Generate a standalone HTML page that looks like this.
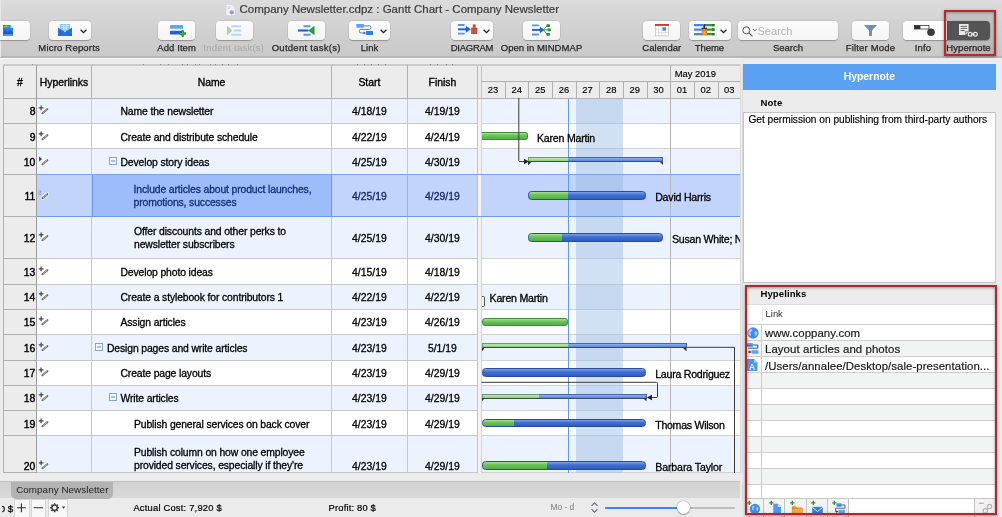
<!DOCTYPE html>
<html><head><meta charset="utf-8"><title>Company Newsletter</title>
<style>
*{box-sizing:border-box}
html,body{margin:0;padding:0}
body{width:1002px;height:517px;overflow:hidden;position:relative;background:#ececec;font-family:"Liberation Sans",sans-serif;color:#000;font-size:11px}
div,span,svg{position:absolute}
#tb{left:0;top:0;width:1002px;height:58px;background:linear-gradient(#dcdcdc,#d3d3d3 40%,#c9c9c9);border-bottom:2px solid #b6b6b6}
.title{top:3px;left:239.5px;font-size:11.5px;color:#3a3a3a;white-space:nowrap;-webkit-text-stroke:.2px #3a3a3a}
.btn{top:21px;height:18.5px;background:linear-gradient(#fcfcfc,#f4f4f4);border-radius:4px;box-shadow:0 0 0 .5px rgba(0,0,0,.10),0 1px 1px rgba(0,0,0,.25)}
.lbl{top:42px;font-size:9.5px;line-height:12px;color:#262626;white-space:nowrap;-webkit-text-stroke:.25px #262626}
.lbl.dis{color:#a9a9a9;-webkit-text-stroke:0}
.hd{background:#ececec;border-right:1px solid #b0b0b0;top:64px;height:35px;border-top:2px solid #cbcbcb;border-bottom:1px solid #b0b0b0;text-align:center;font-size:10.4px;line-height:32px;padding-top:.500px;white-space:nowrap;-webkit-text-stroke:.35px #000}
.row{left:3px;width:737px}
.c{top:0;height:100%;border-right:1px solid #c8c8c8;border-bottom:1px solid #c8c8c8;font-size:10.4px;white-space:nowrap;letter-spacing:-.13px;-webkit-text-stroke:.3px}
.num{left:0;width:34px;background:#ececec;text-align:right;padding-right:.6px;border-left:1px solid #b0b0b0;border-right:1px solid #9c9c9c;border-bottom:1px solid #b0b0b0;letter-spacing:0;-webkit-text-stroke:.4px}
.nm{line-height:13px}
.ctr{text-align:center;letter-spacing:0}
.gl{font-size:10.6px;white-space:nowrap;letter-spacing:-.1px;-webkit-text-stroke:.3px}
</style></head><body><div id="all" style="left:0;top:0;width:1002px;height:517px;will-change:transform">

<div id="tb">
<div style="left:0;top:0;width:1px;height:57px;background:#e9e9e9"></div>
<svg style="left:224.500px;top:3.500px" width="11" height="12" viewBox="0 0 11 12"><path d="M1 .5h6l3 3v8H1z" fill="#f2f2f5" stroke="#d0d0d6" stroke-width=".6"/><circle cx="6.800" cy="8.300" r="2.100" fill="#8c9ce4"/><path d="M2.500 3h3M2.500 4.500h2" stroke="#b5b9d8" stroke-width=".7"/></svg>
<div class="title">Company Newsletter.cdpz : Gantt Chart - Company Newsletter</div>
<div class="btn" style="left:-6px;width:35.5px;"><svg style="left:8.5px;top:3.5px" width="10.5" height="11.5" viewBox="0 0 10.5 11.5"><path d="M0 0h7.500l3 3v8.500H0z" fill="#2a7de6"/><path d="M7.500 0v3h3z" fill="#bfe0ff"/><path d="M.800 1.600h5" stroke="#6fd35a" stroke-width="1.600"/><path d="M0 7l2.500-2 2.500 2 2.500-1.500 3 2.500v1H0z" fill="#1b5fc4"/><path d="M1 10h8.500" stroke="#7fb8f7" stroke-width=".8"/></svg></div>
<div class="btn" style="left:48.5px;width:42.0px;"><svg style="left:9.0px;top:3px" width="14" height="12" viewBox="0 0 14 12"><path d="M2 0h10v7H2z" fill="#8cc6f8"/><path d="M3.200 1.500h7.600M3.200 3.300h7.600M3.200 5.100h7.600M5.700 .500v5M8.300 .500v5" stroke="#e4f2ff" stroke-width=".6"/><path d="M0 3.500v8.500h14V3.500l-7 4.500z" fill="#2a72da"/><path d="M0 12l5.500-4.500M14 12l-5.500-4.500" stroke="#1d5cc0" stroke-width=".6"/></svg><svg style="left:31.3px;top:7.6px" width="7" height="5" viewBox="0 0 7 5"><path d="M.6.8 3.500 3.700 6.400.8" fill="none" stroke="#222" stroke-width="1.300"/></svg></div>
<div class="lbl " style="left:38.3px;letter-spacing:0.198px">Micro Reports</div>
<div class="btn" style="left:157.7px;width:37.30000000000001px;"><svg style="left:12.3px;top:3.8px" width="16" height="12" viewBox="0 0 16 12"><rect x="0" y="0" width="13" height="3.800" rx=".6" fill="#5aa5f6"/><rect x="0" y="5.700" width="13" height="3.800" rx=".6" fill="#1f63d8"/><path d="M10.400 8.500h4.600M12.700 6.200v4.600" stroke="#1e7a1e" stroke-width="2.400" stroke-linecap="round"/><path d="M10.600 8.500h4.200M12.700 6.400v4.200" stroke="#4ab84a" stroke-width="1.100" stroke-linecap="round"/></svg></div>
<div class="lbl " style="left:157.3px;letter-spacing:0.084px">Add Item</div>
<div class="btn" style="left:215.6px;width:37.0px;"><svg style="left:11.2px;top:4px" width="15" height="11" viewBox="0 0 15 11"><path d="M0 .500l5.200 5-5.200 5z" fill="#a4d8a8"/><path d="M4.200 1.200h10M6.600 5.500h7.600M4.200 9.800h10" stroke="#b9d6f8" stroke-width="2"/></svg></div>
<div class="lbl dis" style="left:203.3px;letter-spacing:0.238px">Indent task(s)</div>
<div class="btn" style="left:287.8px;width:37.5px;"><svg style="left:10.7px;top:4px" width="17" height="11" viewBox="0 0 17 11"><path d="M16.500 .800l-6.300 4.700 6.300 4.700z" fill="#2c9a2c"/><path d="M5.500 1.300h7M5.500 9.700h7" stroke="#4a9af5" stroke-width="1.900"/><path d="M0 5.500h10.500" stroke="#1f62d6" stroke-width="2.100"/></svg></div>
<div class="lbl " style="left:271.7px;letter-spacing:0.27px">Outdent task(s)</div>
<div class="btn" style="left:348.6px;width:41.599999999999966px;"><svg style="left:7.4px;top:3px" width="17.5" height="11.5" viewBox="0 0 17.5 11.5"><rect x=".300" y="0" width="7.600" height="3.700" rx=".5" fill="#5aa5f6"/><rect x="10" y="7" width="7" height="4" rx=".5" fill="#2f7fe6"/><path d="M7.900 1.900h5.500q1.500 0 1.500 1.500v.5q0 1.500 -1.500 1.500h-8.500q-1.500 0 -1.500 1.500v.6q0 1.500 1.500 1.500h3.500" fill="none" stroke="#4a6ea8" stroke-width=".9"/><path d="M7.600 7.400l2.200 1.600-2.200 1.600z" fill="#2a4f8f"/></svg><svg style="left:31.2px;top:7.6px" width="7" height="5" viewBox="0 0 7 5"><path d="M.6.8 3.500 3.700 6.400.8" fill="none" stroke="#222" stroke-width="1.300"/></svg></div>
<div class="lbl " style="left:360.7px;letter-spacing:0.041px">Link</div>
<div class="btn" style="left:451px;width:42.19999999999999px;"><svg style="left:7px;top:3.3px" width="20" height="11" viewBox="0 0 20 11"><path d="M0 1h6.600M0 9.600h6.600" stroke="#4a9af5" stroke-width="1.900"/><path d="M0 5.300h9" stroke="#1f62d6" stroke-width="2"/><path d="M7.800 1.800l5 3.500-5 3.500z" fill="#1f62d6"/><path d="M13.200 3.800h6v6.200h-6z" fill="#c7402c"/><path d="M14.800 .400h2.800v3.400h-2.800z" fill="#c7402c"/><path d="M14.600 5.200v4M16.200 5.200v4M17.800 5.200v4" stroke="#e08070" stroke-width=".5"/></svg><svg style="left:31.6px;top:7.6px" width="7" height="5" viewBox="0 0 7 5"><path d="M.6.8 3.500 3.700 6.400.8" fill="none" stroke="#222" stroke-width="1.300"/></svg></div>
<div class="lbl " style="left:450.7px;letter-spacing:-0.249px">DIAGRAM</div>
<div class="btn" style="left:523px;width:37px;"><svg style="left:9.3px;top:3.3px" width="19" height="12" viewBox="0 0 19 12"><path d="M0 1.400h6.800M0 10.500h6.800" stroke="#4a9af5" stroke-width="1.900"/><path d="M0 5.900h9" stroke="#1f62d6" stroke-width="2"/><path d="M7.800 2.600l4.600 3.300-4.600 3.300z" fill="#1f62d6"/><path d="M11 5.900h4M11.500 5.900l3.500-4M11.500 5.900l3.500 4.400" fill="none" stroke="#2c8f2c" stroke-width=".9"/><rect x="14.300" y=".200" width="3.800" height="2.800" rx="1.200" fill="#2c8f2c"/><rect x="15.200" y="4.500" width="3.800" height="2.800" rx="1.200" fill="#2c8f2c"/><rect x="14.300" y="9" width="3.800" height="2.800" rx="1.200" fill="#2c8f2c"/></svg></div>
<div class="lbl " style="left:500.7px;letter-spacing:0.055px">Open in MINDMAP</div>
<div class="btn" style="left:643.4px;width:37.0px;"><svg style="left:11.6px;top:3.4px" width="14" height="12.2" viewBox="0 0 14 12.2"><rect x=".300" y=".300" width="13.400" height="11.600" fill="#fff" stroke="#b5b5b5" stroke-width=".6"/><rect x="0" y="0" width="14" height="1.900" fill="#c23a35"/><path d="M3.600 2v10M7 2v10M10.400 2v10M0 5.300h14M0 8.600h14" stroke="#cdcdcd" stroke-width=".6"/><rect x="7.600" y="3.400" width="3.200" height="3.200" fill="#2f7fe6"/></svg></div>
<div class="lbl " style="left:642.3px;letter-spacing:0.055px">Calendar</div>
<div class="btn" style="left:688.8px;width:41.80000000000007px;"><svg style="left:5.5px;top:3px" width="20.5" height="11.5" viewBox="0 0 20.5 11.5"><path d="M0 1.200h9M0 5.700h9M0 10.200h9" stroke="#3a8af0" stroke-width="2.200"/><path d="M11 1.200h9.500M11 5.700h9.500M11 10.200h9.500" stroke="#2f9a2f" stroke-width="2.200"/><path d="M18 1.200h2.500M18 5.700h2.500M18 10.200h2.500" stroke="#1f7a1f" stroke-width="2.200"/><rect x="9.300" y="0" width="1.800" height="4" rx=".8" fill="#2b2b3a"/><rect x="7.600" y="3.600" width="5.400" height="1.800" fill="#3a3a3a"/><rect x="7.600" y="5.400" width="5.400" height="6" fill="#e08a2a"/><path d="M9 7.500v3M10.300 7.500v3M11.600 7.500v3" stroke="#f5c27a" stroke-width=".5"/></svg><svg style="left:31.4px;top:7.6px" width="7" height="5" viewBox="0 0 7 5"><path d="M.6.8 3.500 3.700 6.400.8" fill="none" stroke="#222" stroke-width="1.300"/></svg></div>
<div class="lbl " style="left:694.7px;letter-spacing:-0.056px">Theme</div>
<div class="btn" style="left:737.5px;width:100.5px"><svg style="left:4.0px;top:4.8px" width="16" height="11" viewBox="0 0 16 11"><circle cx="4.300" cy="4.300" r="3.500" fill="none" stroke="#555" stroke-width="1"/><path d="M6.900 6.900l3.600 3.500" stroke="#555" stroke-width="1.200"/><path d="M11 3l1.900 1.900 1.900-1.900" fill="none" stroke="#555" stroke-width=".9"/></svg><span style="left:20px;top:3.500px;font-size:11px;line-height:13px;color:#b3b3b3">Search</span></div>
<div class="lbl " style="left:773px;letter-spacing:-0.018px">Search</div>
<div class="btn" style="left:852px;width:37.299999999999955px;"><svg style="left:12.3px;top:3.7px" width="13" height="11" viewBox="0 0 13 11"><path d="M0 0h13L8 5.600V11H5V5.600z" fill="#6d90bb"/></svg></div>
<div class="lbl " style="left:845.7px;letter-spacing:0.189px">Filter Mode</div>
<div class="btn" style="left:902.7px;width:87px;background:linear-gradient(90deg,#fcfcfc 44px,#5c5c5c 44px)"><svg style="left:11.8px;top:4px" width="21" height="12" viewBox="0 0 21 12"><rect x=".4" y=".4" width="14.500" height="3.600" fill="#fff" stroke="#3a3a3a" stroke-width=".8"/><rect x=".4" y=".4" width="6" height="3.600" fill="#2e2e2e"/><circle cx="17" cy="7.300" r="3.800" fill="#3a3a3a"/></svg><svg style="left:56.1px;top:3px" width="19" height="13" viewBox="0 0 19 13"><path d="M0 0h9.600v7.500l-3 3.500H0z" fill="#fff"/><path d="M1.600 2.300h6.400M1.600 4.400h6.400M1.600 6.500h4" stroke="#5c5c5c" stroke-width=".9"/><path d="M6.400 11V7.600h3.200" fill="#d8d8d8" stroke="#5c5c5c" stroke-width=".5"/><circle cx="11.200" cy="10.200" r="1.900" fill="none" stroke="#fff" stroke-width="1.200"/><circle cx="16.300" cy="10.200" r="1.900" fill="none" stroke="#fff" stroke-width="1.200"/><path d="M12 10.200h3.600" stroke="#fff" stroke-width="1.200"/></svg></div>
<div class="lbl " style="left:914.7px;letter-spacing:0.185px">Info</div>
<div class="lbl " style="left:946.3px;letter-spacing:0.062px">Hypernote</div>
<div style="left:943.500px;top:10px;width:52.500px;height:46px;border:2px solid #bb272d;background:rgba(0,0,0,.085);box-shadow:0 1px 3px rgba(0,0,0,.4),inset 0 1px 3px rgba(0,0,0,.3)"></div>
</div>
<div style="left:0;top:58px;width:1002px;height:1.200px;background:#f8f8f8"></div>
<div class="hd" style="left:3px;width:34px;border-left:1px solid #b0b0b0;border-right:1px solid #9c9c9c;">#</div>
<div class="hd" style="left:37px;width:55px;">Hyperlinks</div>
<div class="hd" style="left:92px;width:240px;">Name</div>
<div class="hd" style="left:332px;width:75.8px;">Start</div>
<div class="hd" style="left:407.8px;width:70.2px;">Finish</div>
<div class="row" style="top:99px;height:25px;background:#edf3fe;overflow:hidden">
<div class="c num" style="line-height:13px;padding-top:6px">8</div>
<div class="c" style="left:34px;width:55px"></div>
<svg style="left:34.5px;top:6.299999999999997px" width="11" height="10" viewBox="0 0 11 10"><path d="M4.400 8.200l4.900-4" stroke="#fff" stroke-width="3.600" stroke-linecap="round" opacity=".8"/><path d="M.7 2.900h4.800M3.100 .500v4.800" stroke="#fff" stroke-width="2.600" opacity=".8"/><path d="M.7 2.900h4.800M3.100 .500v4.800" stroke="#4a4a4a" stroke-width="1.300"/><path d="M4.400 8.200l4.900-4" stroke="#676767" stroke-width="2.100" stroke-linecap="round"/><path d="M5 7.700l1.300-1.050M7.400 5.750l1.300-1.050" stroke="#e8e8e8" stroke-width=".7" stroke-linecap="round"/></svg>
<div class="c" style="left:89px;width:240px;">
<span class="nm" style="left:28.5px;top:6px">Name the newsletter</span>
</div>
<div class="c ctr" style="left:329px;width:75.800px;line-height:13px;padding-top:6px;">4/18/19</div>
<div class="c ctr" style="left:404.800px;width:70.200px;line-height:13px;padding-top:6px;border-right:1px solid #c2c2c2;">4/19/19</div>
<div style="left:478px;top:0;width:259px;height:100%;border-bottom:1px solid #d2d2d2"></div>
</div>
<div class="row" style="top:124px;height:25px;background:#fff;overflow:hidden">
<div class="c num" style="line-height:13px;padding-top:7px">9</div>
<div class="c" style="left:34px;width:55px"></div>
<svg style="left:34.5px;top:7.300000000000011px" width="11" height="10" viewBox="0 0 11 10"><path d="M4.400 8.200l4.900-4" stroke="#fff" stroke-width="3.600" stroke-linecap="round" opacity=".8"/><path d="M.7 2.900h4.800M3.100 .500v4.800" stroke="#fff" stroke-width="2.600" opacity=".8"/><path d="M.7 2.900h4.800M3.100 .500v4.800" stroke="#4a4a4a" stroke-width="1.300"/><path d="M4.400 8.200l4.900-4" stroke="#676767" stroke-width="2.100" stroke-linecap="round"/><path d="M5 7.700l1.300-1.050M7.400 5.750l1.300-1.050" stroke="#e8e8e8" stroke-width=".7" stroke-linecap="round"/></svg>
<div class="c" style="left:89px;width:240px;">
<span class="nm" style="left:28.5px;top:7px">Create and distribute schedule</span>
</div>
<div class="c ctr" style="left:329px;width:75.800px;line-height:13px;padding-top:7px;">4/22/19</div>
<div class="c ctr" style="left:404.800px;width:70.200px;line-height:13px;padding-top:7px;border-right:1px solid #c2c2c2;">4/24/19</div>
<div style="left:478px;top:0;width:259px;height:100%;border-bottom:1px solid #d2d2d2"></div>
</div>
<div class="row" style="top:149px;height:26px;background:#edf3fe;overflow:hidden">
<div class="c num" style="line-height:13px;padding-top:7px">10</div>
<div class="c" style="left:34px;width:55px"></div>
<svg style="left:34.5px;top:7.300000000000011px" width="11" height="10" viewBox="0 0 11 10"><path d="M4.400 8.200l4.900-4" stroke="#fff" stroke-width="3.600" stroke-linecap="round" opacity=".8"/><path d="M1 .500l3.200 2.500-3.200 2.500z" fill="#4a4a4a"/><path d="M4.400 8.200l4.900-4" stroke="#676767" stroke-width="2.100" stroke-linecap="round"/><path d="M5 7.700l1.300-1.050M7.400 5.750l1.300-1.050" stroke="#e8e8e8" stroke-width=".7" stroke-linecap="round"/></svg>
<div class="c" style="left:89px;width:240px;">
<svg style="left:16.7px;top:8.3px" width="8" height="8" viewBox="0 0 8 8"><rect x=".5" y=".5" width="7" height="7" fill="#f4f8ff" stroke="#86a6cc" stroke-width="1"/><path d="M2 4h4" stroke="#5f86bd" stroke-width="1"/></svg>
<span class="nm" style="left:28.5px;top:7px">Develop story ideas</span>
</div>
<div class="c ctr" style="left:329px;width:75.800px;line-height:13px;padding-top:7px;">4/25/19</div>
<div class="c ctr" style="left:404.800px;width:70.200px;line-height:13px;padding-top:7px;border-right:1px solid #c2c2c2;">4/30/19</div>
<div style="left:478px;top:0;width:259px;height:100%;border-bottom:1px solid #d2d2d2"></div>
</div>
<div class="row" style="top:175px;height:42px;background:#c2d4fb;overflow:hidden">
<div class="c num" style="line-height:13px;padding-top:15px">11</div>
<div class="c" style="left:34px;width:55px"></div>
<svg style="left:34.5px;top:15.300000000000011px" width="11" height="10" viewBox="0 0 11 10"><path d="M4.400 8.200l4.900-4" stroke="#fff" stroke-width="3.600" stroke-linecap="round" opacity=".8"/><path d="M1 1.200h.01M2.800 1.200h.01M1 2.800h.01M2.800 2.800h.01M1 4.400h.01M2.800 4.400h.01" stroke="#6a76a0" stroke-width="1" stroke-linecap="round"/><path d="M4.400 8.200l4.900-4" stroke="#676767" stroke-width="2.100" stroke-linecap="round"/><path d="M5 7.700l1.300-1.050M7.400 5.750l1.300-1.050" stroke="#e8e8e8" stroke-width=".7" stroke-linecap="round"/></svg>
<div class="c" style="left:89px;width:240px;background:#9ebcf9;border:1.500px solid #6b98ea;color:#10307a;top:-1px;height:43px;">
<span class="nm" style="left:40.5px;top:7.5px">Include articles about product launches,</span>
<span class="nm" style="left:40.5px;top:20.5px">promotions, successes</span>
</div>
<div class="c ctr" style="left:329px;width:75.800px;line-height:13px;padding-top:15px;color:#14296a;border-right-color:#94b2ef;">4/25/19</div>
<div class="c ctr" style="left:404.800px;width:70.200px;line-height:13px;padding-top:15px;border-right:1px solid #c2c2c2;color:#14296a;">4/29/19</div>
<div style="left:478px;top:0;width:259px;height:100%;border-bottom:1px solid #d2d2d2"></div>
</div>
<div class="row" style="top:217px;height:42px;background:#edf3fe;overflow:hidden">
<div class="c num" style="line-height:13px;padding-top:15px">12</div>
<div class="c" style="left:34px;width:55px"></div>
<svg style="left:34.5px;top:15.300000000000011px" width="11" height="10" viewBox="0 0 11 10"><path d="M4.400 8.200l4.900-4" stroke="#fff" stroke-width="3.600" stroke-linecap="round" opacity=".8"/><path d="M.7 2.900h4.800M3.100 .500v4.800" stroke="#fff" stroke-width="2.600" opacity=".8"/><path d="M.7 2.900h4.800M3.100 .500v4.800" stroke="#4a4a4a" stroke-width="1.300"/><path d="M4.400 8.200l4.900-4" stroke="#676767" stroke-width="2.100" stroke-linecap="round"/><path d="M5 7.700l1.300-1.050M7.400 5.750l1.300-1.050" stroke="#e8e8e8" stroke-width=".7" stroke-linecap="round"/></svg>
<div class="c" style="left:89px;width:240px;">
<span class="nm" style="left:42.0px;top:8px">Offer discounts and other perks to</span>
<span class="nm" style="left:42.0px;top:21px">newsletter subscribers</span>
</div>
<div class="c ctr" style="left:329px;width:75.800px;line-height:13px;padding-top:15px;">4/25/19</div>
<div class="c ctr" style="left:404.800px;width:70.200px;line-height:13px;padding-top:15px;border-right:1px solid #c2c2c2;">4/30/19</div>
<div style="left:478px;top:0;width:259px;height:100%;border-bottom:1px solid #d2d2d2"></div>
</div>
<div class="row" style="top:259px;height:26px;background:#fff;overflow:hidden">
<div class="c num" style="line-height:13px;padding-top:7px">13</div>
<div class="c" style="left:34px;width:55px"></div>
<svg style="left:34.5px;top:7.300000000000011px" width="11" height="10" viewBox="0 0 11 10"><path d="M4.400 8.200l4.900-4" stroke="#fff" stroke-width="3.600" stroke-linecap="round" opacity=".8"/><path d="M.7 2.900h4.800M3.100 .500v4.800" stroke="#fff" stroke-width="2.600" opacity=".8"/><path d="M.7 2.900h4.800M3.100 .500v4.800" stroke="#4a4a4a" stroke-width="1.300"/><path d="M4.400 8.200l4.900-4" stroke="#676767" stroke-width="2.100" stroke-linecap="round"/><path d="M5 7.700l1.300-1.050M7.400 5.750l1.300-1.050" stroke="#e8e8e8" stroke-width=".7" stroke-linecap="round"/></svg>
<div class="c" style="left:89px;width:240px;">
<span class="nm" style="left:28.5px;top:7px">Develop photo ideas</span>
</div>
<div class="c ctr" style="left:329px;width:75.800px;line-height:13px;padding-top:7px;">4/15/19</div>
<div class="c ctr" style="left:404.800px;width:70.200px;line-height:13px;padding-top:7px;border-right:1px solid #c2c2c2;">4/18/19</div>
<div style="left:478px;top:0;width:259px;height:100%;border-bottom:1px solid #d2d2d2"></div>
</div>
<div class="row" style="top:285px;height:25px;background:#edf3fe;overflow:hidden">
<div class="c num" style="line-height:13px;padding-top:6px">14</div>
<div class="c" style="left:34px;width:55px"></div>
<svg style="left:34.5px;top:6.300000000000011px" width="11" height="10" viewBox="0 0 11 10"><path d="M4.400 8.200l4.900-4" stroke="#fff" stroke-width="3.600" stroke-linecap="round" opacity=".8"/><path d="M.7 2.900h4.800M3.100 .500v4.800" stroke="#fff" stroke-width="2.600" opacity=".8"/><path d="M.7 2.900h4.800M3.100 .500v4.800" stroke="#4a4a4a" stroke-width="1.300"/><path d="M4.400 8.200l4.900-4" stroke="#676767" stroke-width="2.100" stroke-linecap="round"/><path d="M5 7.700l1.300-1.050M7.400 5.750l1.300-1.050" stroke="#e8e8e8" stroke-width=".7" stroke-linecap="round"/></svg>
<div class="c" style="left:89px;width:240px;">
<span class="nm" style="left:28.5px;top:6px">Create a stylebook for contributors 1</span>
</div>
<div class="c ctr" style="left:329px;width:75.800px;line-height:13px;padding-top:6px;">4/22/19</div>
<div class="c ctr" style="left:404.800px;width:70.200px;line-height:13px;padding-top:6px;border-right:1px solid #c2c2c2;">4/22/19</div>
<div style="left:478px;top:0;width:259px;height:100%;border-bottom:1px solid #d2d2d2"></div>
</div>
<div class="row" style="top:310px;height:25px;background:#fff;overflow:hidden">
<div class="c num" style="line-height:13px;padding-top:6px">15</div>
<div class="c" style="left:34px;width:55px"></div>
<svg style="left:34.5px;top:6.300000000000011px" width="11" height="10" viewBox="0 0 11 10"><path d="M4.400 8.200l4.900-4" stroke="#fff" stroke-width="3.600" stroke-linecap="round" opacity=".8"/><path d="M.7 2.900h4.800M3.100 .500v4.800" stroke="#fff" stroke-width="2.600" opacity=".8"/><path d="M.7 2.900h4.800M3.100 .500v4.800" stroke="#4a4a4a" stroke-width="1.300"/><path d="M4.400 8.200l4.900-4" stroke="#676767" stroke-width="2.100" stroke-linecap="round"/><path d="M5 7.700l1.300-1.050M7.400 5.750l1.300-1.050" stroke="#e8e8e8" stroke-width=".7" stroke-linecap="round"/></svg>
<div class="c" style="left:89px;width:240px;">
<span class="nm" style="left:28.5px;top:6px">Assign articles</span>
</div>
<div class="c ctr" style="left:329px;width:75.800px;line-height:13px;padding-top:6px;">4/23/19</div>
<div class="c ctr" style="left:404.800px;width:70.200px;line-height:13px;padding-top:6px;border-right:1px solid #c2c2c2;">4/26/19</div>
<div style="left:478px;top:0;width:259px;height:100%;border-bottom:1px solid #d2d2d2"></div>
</div>
<div class="row" style="top:335px;height:26px;background:#edf3fe;overflow:hidden">
<div class="c num" style="line-height:13px;padding-top:7px">16</div>
<div class="c" style="left:34px;width:55px"></div>
<svg style="left:34.5px;top:7.300000000000011px" width="11" height="10" viewBox="0 0 11 10"><path d="M4.400 8.200l4.900-4" stroke="#fff" stroke-width="3.600" stroke-linecap="round" opacity=".8"/><path d="M.7 2.900h4.800M3.100 .500v4.800" stroke="#fff" stroke-width="2.600" opacity=".8"/><path d="M.7 2.900h4.800M3.100 .500v4.800" stroke="#4a4a4a" stroke-width="1.300"/><path d="M4.400 8.200l4.900-4" stroke="#676767" stroke-width="2.100" stroke-linecap="round"/><path d="M5 7.700l1.300-1.050M7.400 5.750l1.300-1.050" stroke="#e8e8e8" stroke-width=".7" stroke-linecap="round"/></svg>
<div class="c" style="left:89px;width:240px;">
<svg style="left:3.1999999999999993px;top:8.3px" width="8" height="8" viewBox="0 0 8 8"><rect x=".5" y=".5" width="7" height="7" fill="#f4f8ff" stroke="#86a6cc" stroke-width="1"/><path d="M2 4h4" stroke="#5f86bd" stroke-width="1"/></svg>
<span class="nm" style="left:15px;top:7px">Design pages and write articles</span>
</div>
<div class="c ctr" style="left:329px;width:75.800px;line-height:13px;padding-top:7px;">4/23/19</div>
<div class="c ctr" style="left:404.800px;width:70.200px;line-height:13px;padding-top:7px;border-right:1px solid #c2c2c2;">5/1/19</div>
<div style="left:478px;top:0;width:259px;height:100%;border-bottom:1px solid #d2d2d2"></div>
</div>
<div class="row" style="top:361px;height:25px;background:#fff;overflow:hidden">
<div class="c num" style="line-height:13px;padding-top:6px">17</div>
<div class="c" style="left:34px;width:55px"></div>
<svg style="left:34.5px;top:6.300000000000011px" width="11" height="10" viewBox="0 0 11 10"><path d="M4.400 8.200l4.900-4" stroke="#fff" stroke-width="3.600" stroke-linecap="round" opacity=".8"/><path d="M.7 2.900h4.800M3.100 .500v4.800" stroke="#fff" stroke-width="2.600" opacity=".8"/><path d="M.7 2.900h4.800M3.100 .500v4.800" stroke="#4a4a4a" stroke-width="1.300"/><path d="M4.400 8.200l4.900-4" stroke="#676767" stroke-width="2.100" stroke-linecap="round"/><path d="M5 7.700l1.300-1.050M7.400 5.750l1.300-1.050" stroke="#e8e8e8" stroke-width=".7" stroke-linecap="round"/></svg>
<div class="c" style="left:89px;width:240px;">
<span class="nm" style="left:28.5px;top:6px">Create page layouts</span>
</div>
<div class="c ctr" style="left:329px;width:75.800px;line-height:13px;padding-top:6px;">4/23/19</div>
<div class="c ctr" style="left:404.800px;width:70.200px;line-height:13px;padding-top:6px;border-right:1px solid #c2c2c2;">4/29/19</div>
<div style="left:478px;top:0;width:259px;height:100%;border-bottom:1px solid #d2d2d2"></div>
</div>
<div class="row" style="top:386px;height:25px;background:#edf3fe;overflow:hidden">
<div class="c num" style="line-height:13px;padding-top:6px">18</div>
<div class="c" style="left:34px;width:55px"></div>
<svg style="left:34.5px;top:6.300000000000011px" width="11" height="10" viewBox="0 0 11 10"><path d="M4.400 8.200l4.900-4" stroke="#fff" stroke-width="3.600" stroke-linecap="round" opacity=".8"/><path d="M.7 2.900h4.800M3.100 .500v4.800" stroke="#fff" stroke-width="2.600" opacity=".8"/><path d="M.7 2.900h4.800M3.100 .500v4.800" stroke="#4a4a4a" stroke-width="1.300"/><path d="M4.400 8.200l4.900-4" stroke="#676767" stroke-width="2.100" stroke-linecap="round"/><path d="M5 7.700l1.300-1.050M7.400 5.750l1.300-1.050" stroke="#e8e8e8" stroke-width=".7" stroke-linecap="round"/></svg>
<div class="c" style="left:89px;width:240px;">
<svg style="left:16.7px;top:7.300000000000001px" width="8" height="8" viewBox="0 0 8 8"><rect x=".5" y=".5" width="7" height="7" fill="#f4f8ff" stroke="#86a6cc" stroke-width="1"/><path d="M2 4h4" stroke="#5f86bd" stroke-width="1"/></svg>
<span class="nm" style="left:28.5px;top:6px">Write articles</span>
</div>
<div class="c ctr" style="left:329px;width:75.800px;line-height:13px;padding-top:6px;">4/23/19</div>
<div class="c ctr" style="left:404.800px;width:70.200px;line-height:13px;padding-top:6px;border-right:1px solid #c2c2c2;">4/29/19</div>
<div style="left:478px;top:0;width:259px;height:100%;border-bottom:1px solid #d2d2d2"></div>
</div>
<div class="row" style="top:411px;height:25px;background:#fff;overflow:hidden">
<div class="c num" style="line-height:13px;padding-top:7px">19</div>
<div class="c" style="left:34px;width:55px"></div>
<svg style="left:34.5px;top:7.300000000000011px" width="11" height="10" viewBox="0 0 11 10"><path d="M4.400 8.200l4.900-4" stroke="#fff" stroke-width="3.600" stroke-linecap="round" opacity=".8"/><path d="M.7 2.900h4.800M3.100 .500v4.800" stroke="#fff" stroke-width="2.600" opacity=".8"/><path d="M.7 2.900h4.800M3.100 .500v4.800" stroke="#4a4a4a" stroke-width="1.300"/><path d="M4.400 8.200l4.900-4" stroke="#676767" stroke-width="2.100" stroke-linecap="round"/><path d="M5 7.700l1.300-1.050M7.400 5.750l1.300-1.050" stroke="#e8e8e8" stroke-width=".7" stroke-linecap="round"/></svg>
<div class="c" style="left:89px;width:240px;">
<span class="nm" style="left:42.0px;top:7px">Publish general services on back cover</span>
</div>
<div class="c ctr" style="left:329px;width:75.800px;line-height:13px;padding-top:7px;">4/23/19</div>
<div class="c ctr" style="left:404.800px;width:70.200px;line-height:13px;padding-top:7px;border-right:1px solid #c2c2c2;">4/29/19</div>
<div style="left:478px;top:0;width:259px;height:100%;border-bottom:1px solid #d2d2d2"></div>
</div>
<div class="row" style="top:436px;height:37px;background:#edf3fe;overflow:hidden">
<div class="c num" style="line-height:13px;padding-top:24px">20</div>
<div class="c" style="left:34px;width:55px"></div>
<svg style="left:34.5px;top:24.30000000000001px" width="11" height="10" viewBox="0 0 11 10"><path d="M4.400 8.200l4.900-4" stroke="#fff" stroke-width="3.600" stroke-linecap="round" opacity=".8"/><path d="M.7 2.900h4.800M3.100 .500v4.800" stroke="#fff" stroke-width="2.600" opacity=".8"/><path d="M.7 2.900h4.800M3.100 .500v4.800" stroke="#4a4a4a" stroke-width="1.300"/><path d="M4.400 8.200l4.900-4" stroke="#676767" stroke-width="2.100" stroke-linecap="round"/><path d="M5 7.700l1.300-1.050M7.400 5.750l1.300-1.050" stroke="#e8e8e8" stroke-width=".7" stroke-linecap="round"/></svg>
<div class="c" style="left:89px;width:240px;">
<span class="nm" style="left:42.0px;top:10px">Publish column on how one employee</span>
<span class="nm" style="left:42.0px;top:23px">provided services, especially if they're</span>
</div>
<div class="c ctr" style="left:329px;width:75.800px;line-height:13px;padding-top:24px;">4/23/19</div>
<div class="c ctr" style="left:404.800px;width:70.200px;line-height:13px;padding-top:24px;border-right:1px solid #c2c2c2;">4/29/19</div>
<div style="left:478px;top:0;width:259px;height:100%;border-bottom:1px solid #d2d2d2"></div>
</div>
<div style="left:32px;top:63.500px;width:1.200px;height:1px;background:#8c8c8c"></div>
<div style="left:143px;top:63.500px;width:1.200px;height:1px;background:#8c8c8c"></div>
<div style="left:160px;top:63.500px;width:1.200px;height:1px;background:#8c8c8c"></div>
<div style="left:168px;top:63.500px;width:1.200px;height:1px;background:#8c8c8c"></div>
<div style="left:182px;top:63.500px;width:1.200px;height:1px;background:#8c8c8c"></div>
<div style="left:187px;top:63.500px;width:1.200px;height:1px;background:#8c8c8c"></div>
<div style="left:195px;top:63.500px;width:1.200px;height:1px;background:#8c8c8c"></div>
<div style="left:199px;top:63.500px;width:1.200px;height:1px;background:#8c8c8c"></div>
<div style="left:210px;top:63.500px;width:1.200px;height:1px;background:#8c8c8c"></div>
<div style="left:215px;top:63.500px;width:1.200px;height:1px;background:#8c8c8c"></div>
<div style="left:222px;top:63.500px;width:1.200px;height:1px;background:#8c8c8c"></div>
<div style="left:228px;top:63.500px;width:1.200px;height:1px;background:#8c8c8c"></div>
<div style="left:237px;top:63.500px;width:1.200px;height:1px;background:#8c8c8c"></div>
<div style="left:357px;top:63.500px;width:1.200px;height:1px;background:#8c8c8c"></div>
<div style="left:364px;top:63.500px;width:1.200px;height:1px;background:#8c8c8c"></div>
<div style="left:371px;top:63.500px;width:1.200px;height:1px;background:#8c8c8c"></div>
<div style="left:378px;top:63.500px;width:1.200px;height:1px;background:#8c8c8c"></div>
<div style="left:385px;top:63.500px;width:1.200px;height:1px;background:#8c8c8c"></div>
<div style="left:430px;top:63.500px;width:1.200px;height:1px;background:#8c8c8c"></div>
<div style="left:437px;top:63.500px;width:1.200px;height:1px;background:#8c8c8c"></div>
<div style="left:446px;top:63.500px;width:1.200px;height:1px;background:#8c8c8c"></div>
<div style="left:452px;top:63.500px;width:1.200px;height:1px;background:#8c8c8c"></div>
<div style="left:478px;top:65px;width:3px;height:408px;background:#f3f3f3"></div>
<div style="left:477px;top:64px;width:263px;height:35px;background:#ececec;border-top:2px solid #cbcbcb;border-bottom:1px solid #b0b0b0"></div>
<div style="left:481px;top:65px;width:1px;height:34px;background:#c0c0c0"></div>
<div style="left:477px;top:65px;width:1px;height:34px;background:#b8b8b8"></div>
<div style="left:481px;top:81px;width:259px;height:1px;background:#b0b0b0"></div>
<div style="left:670.24px;top:65px;width:1px;height:17px;background:#b0b0b0"></div>
<div style="left:674.74px;top:67px;font-size:9.400px;line-height:13px;white-space:nowrap;-webkit-text-stroke:.15px">May 2019</div>
<div style="left:481.2px;top:83px;width:23.63px;text-align:center;font-size:9.400px;line-height:13px;-webkit-text-stroke:.15px">23</div>
<div style="left:504.83px;top:82px;width:1px;height:16px;background:#b0b0b0"></div>
<div style="left:504.83px;top:83px;width:23.63px;text-align:center;font-size:9.400px;line-height:13px;-webkit-text-stroke:.15px">24</div>
<div style="left:528.46px;top:82px;width:1px;height:16px;background:#b0b0b0"></div>
<div style="left:528.46px;top:83px;width:23.63px;text-align:center;font-size:9.400px;line-height:13px;-webkit-text-stroke:.15px">25</div>
<div style="left:552.09px;top:82px;width:1px;height:16px;background:#b0b0b0"></div>
<div style="left:552.09px;top:83px;width:23.63px;text-align:center;font-size:9.400px;line-height:13px;-webkit-text-stroke:.15px">26</div>
<div style="left:575.72px;top:82px;width:1px;height:16px;background:#b0b0b0"></div>
<div style="left:575.72px;top:83px;width:23.63px;text-align:center;font-size:9.400px;line-height:13px;-webkit-text-stroke:.15px">27</div>
<div style="left:599.35px;top:82px;width:1px;height:16px;background:#b0b0b0"></div>
<div style="left:599.35px;top:83px;width:23.63px;text-align:center;font-size:9.400px;line-height:13px;-webkit-text-stroke:.15px">28</div>
<div style="left:622.98px;top:82px;width:1px;height:16px;background:#b0b0b0"></div>
<div style="left:622.98px;top:83px;width:23.63px;text-align:center;font-size:9.400px;line-height:13px;-webkit-text-stroke:.15px">29</div>
<div style="left:646.61px;top:82px;width:1px;height:16px;background:#b0b0b0"></div>
<div style="left:646.61px;top:83px;width:23.63px;text-align:center;font-size:9.400px;line-height:13px;-webkit-text-stroke:.15px">30</div>
<div style="left:670.24px;top:82px;width:1px;height:16px;background:#b0b0b0"></div>
<div style="left:670.24px;top:83px;width:23.63px;text-align:center;font-size:9.400px;line-height:13px;-webkit-text-stroke:.15px">01</div>
<div style="left:693.87px;top:82px;width:1px;height:16px;background:#b0b0b0"></div>
<div style="left:693.87px;top:83px;width:23.63px;text-align:center;font-size:9.400px;line-height:13px;-webkit-text-stroke:.15px">02</div>
<div style="left:717.5px;top:82px;width:1px;height:16px;background:#b0b0b0"></div>
<div style="left:717.5px;top:83px;width:23.63px;text-align:center;font-size:9.400px;line-height:13px;-webkit-text-stroke:.15px">03</div>
<div style="left:481px;top:99px;width:1px;height:374px;background:#d2d2d2"></div>
<div style="left:575.72px;top:99px;width:47.26px;height:374px;background:rgba(146,180,224,.42)"></div>
<div style="left:670.24px;top:99px;width:1px;height:374px;background:#b4b4b4"></div>
<div style="left:567.500px;top:99px;width:1.200px;height:374px;background:#5b9cf0"></div>
<div style="left:37px;top:174px;width:703px;height:1.300px;background:#7aa2ee"></div>
<div style="left:37px;top:215.700px;width:703px;height:1.500px;background:#6f9aec"></div>
<div style="left:481.5px;top:132px;width:46.5px;height:8.3px;border-radius:0 3px 3px 0;background:linear-gradient(#a8e092,#6cc35a 40%,#4fae42);border:1px solid #3f8f33;border-left:none;"></div>
<div class="gl" style="left:537px;top:132px;line-height:13px;letter-spacing:-0.221px">Karen Martin</div>
<div style="left:528.3px;top:157px;width:134.70000000000005px;height:5.200px;background:linear-gradient(#8fb0ee,#5a84d8);border:1px solid #4468b4;border-bottom-color:#3c4c6c"></div>
<div style="left:528.3px;top:157px;width:39.5px;height:5.200px;background:linear-gradient(#c0e8ae,#8ad07a);border:1px solid #6a9a78;border-bottom-color:#3c4c3c;border-right:none"></div>
<svg style="left:528.3px;top:161.5px" width="3.500" height="3.500" viewBox="0 0 4 4"><path d="M0 0h4L0 4z" fill="#333"/></svg>
<svg style="left:659.5px;top:161.5px" width="3.500" height="3.500" viewBox="0 0 4 4"><path d="M0 0h4v4z" fill="#333"/></svg>
<div style="left:528px;top:191px;width:118.29999999999995px;height:8.6px;border-radius:3.5px 3.5px 3.5px 3.5px;background:linear-gradient(#7da2ea,#4271d2 40%,#2f5cbc);border:1px solid #2a4c9c;overflow:hidden">
<div style="left:-1px;top:-1px;width:39.799999999999955px;height:8.6px;background:linear-gradient(#a8e092,#6cc35a 40%,#4fae42);border:1px solid #3f8f33;border-right:none;border-radius:3.5px 0 0 3.5px"></div>
</div>
<div class="gl" style="left:655.2px;top:191px;line-height:13px;letter-spacing:-0.215px">David Harris</div>
<div style="left:528px;top:233.2px;width:135.20000000000005px;height:8.6px;border-radius:3.5px 3.5px 3.5px 3.5px;background:linear-gradient(#7da2ea,#4271d2 40%,#2f5cbc);border:1px solid #2a4c9c;overflow:hidden">
<div style="left:-1px;top:-1px;width:34.200000000000045px;height:8.6px;background:linear-gradient(#a8e092,#6cc35a 40%,#4fae42);border:1px solid #3f8f33;border-right:none;border-radius:3.5px 0 0 3.5px"></div>
</div>
<div class="gl" style="left:672px;top:233px;line-height:13px;letter-spacing:-0.244px">Susan White; N</div>
<div style="left:481.500px;top:296px;width:3.500px;height:10.500px;border:1px solid #555;border-left:none;border-radius:0 2px 2px 0;background:#f4f4f4"></div>
<div class="gl" style="left:489.6px;top:292px;line-height:13px;letter-spacing:-0.221px">Karen Martin</div>
<div style="left:482px;top:317.7px;width:86px;height:8.2px;border-radius:3px 3px 3px 3px;background:linear-gradient(#a8e092,#6cc35a 40%,#4fae42);border:1px solid #3f8f33;"></div>
<div style="left:481.5px;top:343px;width:205.0px;height:5.200px;background:linear-gradient(#8fb0ee,#5a84d8);border:1px solid #4468b4;border-bottom-color:#3c4c6c"></div>
<div style="left:481.5px;top:343px;width:86.5px;height:5.200px;background:linear-gradient(#c0e8ae,#8ad07a);border:1px solid #6a9a78;border-bottom-color:#3c4c3c;border-right:none"></div>
<svg style="left:481.5px;top:347.5px" width="2.500" height="3.500" viewBox="0 0 3 4"><path d="M0 0h3L0 4z" fill="#333"/></svg>
<svg style="left:683.0px;top:347.5px" width="3.500" height="3.500" viewBox="0 0 4 4"><path d="M0 0h4v4z" fill="#333"/></svg>
<div style="left:482px;top:368px;width:164.29999999999995px;height:9px;border-radius:3.5px 3.5px 3.5px 3.5px;background:linear-gradient(#7da2ea,#4271d2 40%,#2f5cbc);border:1px solid #2a4c9c;overflow:hidden">
</div>
<div class="gl" style="left:655.2px;top:368px;line-height:13px;letter-spacing:-0.242px">Laura Rodriguez</div>
<div style="left:481.5px;top:393.5px;width:165.0px;height:5.200px;background:linear-gradient(#8fb0ee,#5a84d8);border:1px solid #4468b4;border-bottom-color:#3c4c6c"></div>
<div style="left:481.5px;top:393.5px;width:57.0px;height:5.200px;background:linear-gradient(#c0e8ae,#8ad07a);border:1px solid #6a9a78;border-bottom-color:#3c4c3c;border-right:none"></div>
<svg style="left:481.5px;top:398.0px" width="2.500" height="3.500" viewBox="0 0 3 4"><path d="M0 0h3L0 4z" fill="#333"/></svg>
<svg style="left:643.0px;top:398.0px" width="3.500" height="3.500" viewBox="0 0 4 4"><path d="M0 0h4v4z" fill="#333"/></svg>
<div style="left:482px;top:418.7px;width:164.29999999999995px;height:8.8px;border-radius:3.5px 3.5px 3.5px 3.5px;background:linear-gradient(#7da2ea,#4271d2 40%,#2f5cbc);border:1px solid #2a4c9c;overflow:hidden">
<div style="left:-1px;top:-1px;width:32px;height:8.8px;background:linear-gradient(#a8e092,#6cc35a 40%,#4fae42);border:1px solid #3f8f33;border-right:none;border-radius:3.5px 0 0 3.5px"></div>
</div>
<div class="gl" style="left:655.2px;top:419px;line-height:13px;letter-spacing:-0.277px">Thomas Wilson</div>
<div style="left:482px;top:461.3px;width:164.29999999999995px;height:8.8px;border-radius:3.5px 3.5px 3.5px 3.5px;background:linear-gradient(#7da2ea,#4271d2 40%,#2f5cbc);border:1px solid #2a4c9c;overflow:hidden">
<div style="left:-1px;top:-1px;width:64.79999999999995px;height:8.8px;background:linear-gradient(#a8e092,#6cc35a 40%,#4fae42);border:1px solid #3f8f33;border-right:none;border-radius:3.5px 0 0 3.5px"></div>
</div>
<div class="gl" style="left:655.2px;top:461px;line-height:13px;letter-spacing:-0.115px">Barbara Taylor</div>
<svg style="left:481px;top:98px" width="259" height="375" viewBox="481 98 259 375"><g fill="none" stroke="#3a3a3a" stroke-width="1"><path d="M518.800 98V160.500Q518.800 161.500 519.800 161.500H525"/><path d="M686.500 347.300H734.500V473"/><path d="M481.500 382.300H656.500Q657.500 382.300 657.500 383.300V396.500Q657.500 397.500 656.500 397.500H651"/></g><path d="M524 158.800l5 2.700-5 2.700z" fill="#222"/><path d="M652 394.700l-5.200 2.800 5.200 2.800z" fill="#222"/></svg>
<div style="left:740px;top:64px;width:3px;height:409px;background:#ececec;border-left:1px solid #dadada"></div>
<div style="left:742.300px;top:64px;width:1px;height:453px;background:#dcdcdc"></div>
<div style="left:0;top:473px;width:743px;height:9px;background:#ececec"></div>
<div style="left:0;top:481.300px;width:739.500px;height:17.200px;background:linear-gradient(#d2d2d2,#d9d9d9);border-top:1px solid #c0c0c0"></div>
<div style="left:11.200px;top:482px;width:102.300px;height:16.500px;background:#b3b3b3;border-radius:0 0 5px 5px;font-size:9.800px;line-height:15.500px;padding-left:5px;color:#1e1e1e;white-space:nowrap;letter-spacing:0.076px">Company Newsletter</div>
<div style="left:0;top:498.500px;width:743px;height:18.500px;background:#ebebeb"></div>
<div style="left:0;top:502px;width:13.500px;height:13px;font-size:9.600px;line-height:13px;white-space:nowrap;overflow:hidden;-webkit-text-stroke:.25px"><span style="right:.5px;top:0">0 $</span></div>
<div style="left:0;top:499px;width:2.200px;height:18px;background:#ebebeb"></div>
<div style="left:14px;top:499.400px;width:15.6px;height:17.600px;border:1px solid #d6d6d6;border-bottom:none;background:#f8f8f8"></div>
<div style="left:30.8px;top:499.400px;width:15.2px;height:17.600px;border:1px solid #d6d6d6;border-bottom:none;background:#f8f8f8"></div>
<div style="left:48px;top:499.400px;width:20.4px;height:17.600px;border:1px solid #d6d6d6;border-bottom:none;background:#f8f8f8"></div>
<svg style="left:14px;top:498px" width="60" height="19" viewBox="14 498 60 19"><path d="M17 507.800h8.800M21.400 503.400v8.800M33.700 507.800h9.400" stroke="#2e2e2e" stroke-width="1.100" fill="none"/><g transform="translate(54.600 507.800)"><circle r="2.700" fill="none" stroke="#3c3c3c" stroke-width="1.500"/><g stroke="#3c3c3c" stroke-width="1.500"><path d="M0-4.500V-3M0 4.500V3M-4.500 0H-3M4.500 0H3M-3.200-3.200l1.100 1.100M3.200 3.200l-1.100-1.100M-3.200 3.200l1.100-1.100M3.200-3.200l-1.100 1.100"/></g></g><path d="M61.800 506.600h3.600l-1.800 2.200z" fill="#3c3c3c"/></svg>
<div style="left:133.4px;top:501px;font-size:9.400px;line-height:13px;white-space:nowrap;letter-spacing:0.203px;-webkit-text-stroke:.2px">Actual Cost: 7,920 $</div>
<div style="left:328.5px;top:501px;font-size:9.400px;line-height:13px;white-space:nowrap;letter-spacing:0.18px;-webkit-text-stroke:.2px">Profit: 80 $</div>
<div style="left:550.500px;top:501px;font-size:8.400px;line-height:13px;white-space:nowrap;color:#7a7a7a">Mo - d</div>
<svg style="left:590px;top:501px" width="9" height="13" viewBox="0 0 9 13"><path d="M1.500 4.800l3-3 3 3M1.500 8.200l3 3 3-3" fill="none" stroke="#6a6a6a" stroke-width="1.100"/></svg>
<div style="left:604.500px;top:506.800px;width:130px;height:1.800px;background:#bdbdbd;border-radius:1px"></div>
<div style="left:604.500px;top:506.600px;width:79px;height:2.200px;background:#3b86f0;border-radius:1px"></div>
<div style="left:677.300px;top:501px;width:13px;height:13px;border-radius:50%;background:#fff;box-shadow:0 0 0 .5px rgba(0,0,0,.18),0 1px 1.500px rgba(0,0,0,.3)"></div>
<div style="left:743px;top:58px;width:259px;height:459px;background:#ececec"></div>
<div style="left:743px;top:64px;width:252.800px;height:25.500px;background:#5aa1f2;color:#fff;font-weight:bold;font-size:10.400px;line-height:25px;text-align:center">Hypernote</div>
<div style="left:760.400px;top:96px;font-weight:bold;font-size:9.600px;line-height:13px;letter-spacing:0.168px">Note</div>
<div style="left:743.400px;top:112px;width:252.600px;height:170.600px;background:#fff;border:1px solid #c4c4c4"><span style="left:4px;top:0px;font-size:10.200px;line-height:13px;white-space:nowrap;letter-spacing:-0.028px;-webkit-text-stroke:.15px">Get permission on publishing from third-party authors</span></div>
<div style="left:760.400px;top:287px;font-weight:bold;font-size:9.600px;line-height:13px;letter-spacing:0.075px">Hypelinks</div>
<div style="left:746.500px;top:304px;width:250px;height:194px;background:#fff;border-top:1px solid #dcdcdc"></div>
<div style="left:765.600px;top:307px;font-size:9.400px;line-height:13px;color:#2d2d2d">Link</div>
<div style="left:746.500px;top:324px;width:250px;height:17px;background:#fff;border-top:1px solid #cdcdcd"></div>
<div class="lk" style="left:765px;top:326px;font-size:11.400px;line-height:15px;white-space:nowrap;color:#1a1a1a;letter-spacing:0.065px;-webkit-text-stroke:.2px">www.coppany.com</div>
<div style="left:746.500px;top:340px;width:250px;height:17px;background:#f2f3f3;border-top:1px solid #cdcdcd"></div>
<div class="lk" style="left:765px;top:342px;font-size:11.400px;line-height:15px;white-space:nowrap;color:#1a1a1a;letter-spacing:0.085px;-webkit-text-stroke:.2px">Layout articles and photos</div>
<div style="left:746.500px;top:356px;width:250px;height:17px;background:#fff;border-top:1px solid #cdcdcd"></div>
<div class="lk" style="left:765px;top:358.5px;font-size:11.400px;line-height:15px;white-space:nowrap;color:#1a1a1a;letter-spacing:0.067px;-webkit-text-stroke:.2px">/Users/annalee/Desktop/sale-presentation...</div>
<div style="left:746.500px;top:372px;width:250px;height:17px;background:#f2f3f3;border-top:1px solid #cdcdcd"></div>
<div style="left:746.500px;top:388px;width:250px;height:17px;background:#fff;border-top:1px solid #cdcdcd"></div>
<div style="left:746.500px;top:404px;width:250px;height:17px;background:#f2f3f3;border-top:1px solid #cdcdcd"></div>
<div style="left:746.500px;top:420px;width:250px;height:17px;background:#fff;border-top:1px solid #cdcdcd"></div>
<div style="left:746.500px;top:436px;width:250px;height:17px;background:#f2f3f3;border-top:1px solid #cdcdcd"></div>
<div style="left:746.500px;top:452px;width:250px;height:17px;background:#fff;border-top:1px solid #cdcdcd"></div>
<div style="left:746.500px;top:468px;width:250px;height:17px;background:#f2f3f3;border-top:1px solid #cdcdcd"></div>
<div style="left:746.500px;top:484px;width:250px;height:14px;background:#fff;border-top:1px solid #cdcdcd"></div>
<div style="left:761px;top:324px;width:1px;height:174px;background:#cdcdcd"></div>
<div style="left:761.500px;top:307px;width:1px;height:14px;background:#e2e2e2"></div>
<svg style="left:747px;top:326.5px" width="12" height="12" viewBox="0 0 12 12"><circle cx="6" cy="6" r="5.7" fill="#3f8df0"/><path d="M3 2.2c1.3-.6 2.4.2 2.2 1.3-.2 1-1.6 1-1.8 2.1-.2.9.8 1.3.6 2.4-.1.7-.8 1-1.4.6C1.400 7.500 1 5.500 1.600 4c.3-.8.8-1.400 1.400-1.800zM8.300 4.200c.9-.2 1.900.5 2 1.600.1 1.200-.5 2.500-1.400 3.100-.7.300-.8-.6-.6-1.200.2-.7-.6-1-.7-1.800-.1-.8.100-1.500.7-1.700z" fill="#a8d0ff"/></svg>
<svg style="left:747px;top:343.300px" width="12" height="11" viewBox="0 0 12 11"><rect x="0" y=".3" width="5.800" height="3.400" fill="#2f7fe6"/><path d="M0 1.400h5.800" stroke="#5aa5f6" stroke-width=".8"/><rect x="4.600" y="7.200" width="6.800" height="3.600" fill="#5aa5f6"/><path d="M5.800 2h5v3.200H1.200" fill="none" stroke="#24467e" stroke-width=".9"/><path d="M1 9h2" stroke="#222" stroke-width=".9"/><path d="M2.400 7.500l2 1.500-2 1.500z" fill="#222"/></svg>
<svg style="left:747px;top:358.500px" width="10.500" height="12.500" viewBox="0 0 11 13"><path d="M0 0h7.500L11 3.500V13H0z" fill="#4d97f1"/><path d="M7.500 0v3.500H11z" fill="#b9d8fb"/><text x="5.300" y="11.500" font-family="Liberation Sans,sans-serif" font-size="9" font-weight="bold" fill="#d6e8ff" text-anchor="middle">A</text></svg>
<div style="left:746.500px;top:498px;width:250px;height:17px;background:#f3f3f3;border-top:1px solid #c6c6c6"></div>
<div style="left:763px;top:498.500px;width:1.300px;height:18.500px;background:#c2c2c2"></div>
<div style="left:784.2px;top:498.500px;width:1.300px;height:18.500px;background:#c2c2c2"></div>
<div style="left:805.6px;top:498.500px;width:1.300px;height:18.500px;background:#c2c2c2"></div>
<div style="left:826.8px;top:498.500px;width:1.300px;height:18.500px;background:#c2c2c2"></div>
<div style="left:847.8px;top:498.500px;width:1.300px;height:18.500px;background:#c2c2c2"></div>
<div style="left:974px;top:498.500px;width:1.300px;height:18.500px;background:#c2c2c2"></div>
<div style="left:849px;top:499px;width:125px;height:14px;background:#fff"></div>
<svg style="left:747.4px;top:500px" width="16" height="15" viewBox="0 0 16 15"><path d="M.2 2.900h4.200M2.300 .800v4.200" stroke="#2a962a" stroke-width="1.300"/><circle cx="7.900" cy="8.900" r="5.200" fill="#3f8df0"/><path d="M6 5.800c1-.4 1.800.2 1.600 1-.2.800-1.200.8-1.300 1.700-.1.700.6 1 .4 1.800-.6.500-1.600-.6-1.700-1.900 0-1 .4-2 1-2.600zM9.800 7.300c.8-.1 1.500.4 1.600 1.300 0 1-.4 1.900-1.100 2.400-.5.200-.6-.5-.5-.9.200-.6-.5-.8-.5-1.400-.1-.7.100-1.200.5-1.400z" fill="#a8d0ff"/></svg>
<svg style="left:768.6px;top:500px" width="16" height="15" viewBox="0 0 16 15"><path d="M.2 2.900h4.200M2.300 .800v4.200" stroke="#2a962a" stroke-width="1.300"/><path d="M4.300 3.800h4.600l3.100 3.100v8.100H4.300z" fill="#4d97f1"/><path d="M8.900 3.800v3.100H12z" fill="#c4defc"/></svg>
<svg style="left:789.8px;top:500px" width="16" height="15" viewBox="0 0 16 15"><path d="M.2 2.900h4.200M2.300 .800v4.200" stroke="#2a962a" stroke-width="1.300"/><path d="M1.800 6.200h4l1.200 1.400h5.500v7.400H1.800z" fill="#e58a2b"/><path d="M3.300 8.800h10.200l-1.500 6.200H1.800z" fill="#f4a94a"/></svg>
<svg style="left:811px;top:500px" width="16" height="15" viewBox="0 0 16 15"><path d="M.2 2.900h4.200M2.300 .800v4.200" stroke="#2a962a" stroke-width="1.300"/><rect x="1.200" y="6.800" width="10.600" height="8.200" fill="#2f7fe6"/><path d="M1.200 7.200l5.300 4.300 5.300-4.300" fill="none" stroke="#cfe4ff" stroke-width="1"/></svg>
<svg style="left:832.2px;top:500px" width="16" height="15" viewBox="0 0 16 15"><path d="M.2 2.900h4.200M2.300 .800v4.200" stroke="#2a962a" stroke-width="1.300"/><rect x="4.600" y="3.400" width="5" height="3.200" fill="#2f7fe6"/><path d="M4.600 4.600h5" stroke="#5aa5f6" stroke-width=".8"/><rect x="6.600" y="9.800" width="6.200" height="3.600" fill="#5aa5f6"/><path d="M9.600 5h3.400v3.200H3.600v3.400h1" fill="none" stroke="#3c5a94" stroke-width=".9"/><path d="M4.300 10.200l2 1.400-2 1.400z" fill="#223"/></svg>
<svg style="left:977px;top:500px" width="18" height="15" viewBox="0 0 18 15"><path d="M1.700 3.300h5" stroke="#ef9a9a" stroke-width="1.300"/><g fill="none" stroke="#b4b4b4" stroke-width="1.200"><circle cx="8.300" cy="10.800" r="2.200"/><circle cx="12.400" cy="6.600" r="2.200"/><path d="M9.500 9.600l1.800-1.800"/></g></svg>
<div style="left:745px;top:285px;width:252px;height:230px;border:2px solid #b9252c;box-shadow:0 1px 3px rgba(0,0,0,.4),inset 0 1px 3px rgba(0,0,0,.38)"></div>
</div></body></html>
